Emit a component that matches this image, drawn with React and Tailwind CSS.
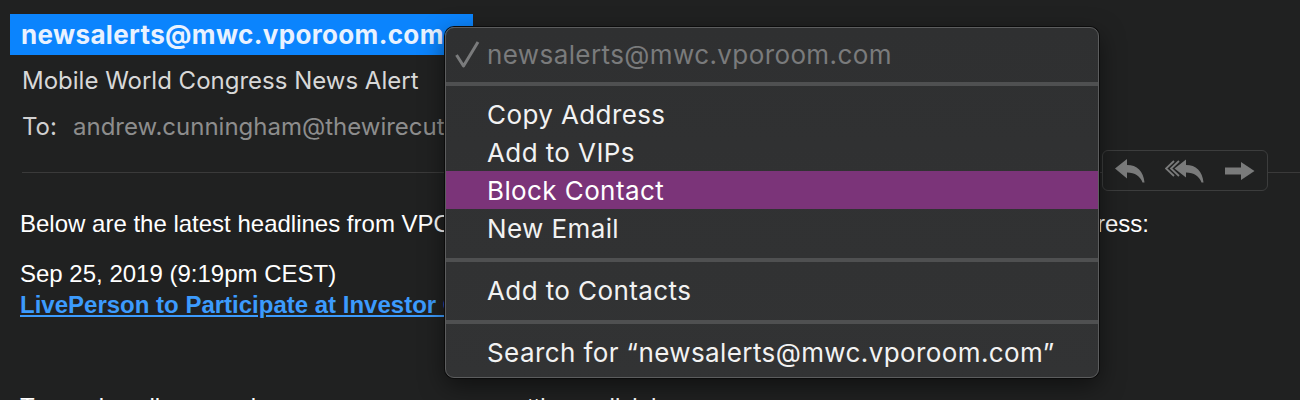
import React from 'react';

const ui = { fontFamily: 'Inter, "Noto Sans", sans-serif' };
const body = { fontFamily: '"Liberation Sans", Arial, sans-serif' };

function ReplyIcon() {
  return (
    <svg width="30" height="24" viewBox="0 0 30 24" fill="#7a7b7b">
      <path d="M0 9.5 L12 0 L12 6 C22 6 28.5 12 29.5 23.5 L27.5 23.5 C25.5 17.5 20 13.5 12 13.5 L12 19.5 Z" />
    </svg>
  );
}

function ReplyAllIcon() {
  return (
    <svg width="40" height="24" viewBox="0 0 40 24" fill="#7a7b7b">
      <path d="M9 2 L1 9.5 L9 17" fill="none" stroke="#7a7b7b" strokeWidth="1.8" />
      <path d="M14 2 L6 9.5 L14 17" fill="none" stroke="#7a7b7b" strokeWidth="1.8" />
      <path d="M9.5 9.5 L21 0.5 L21 6 C31 6 37.5 12 38.5 23.5 L36.5 23.5 C34.5 17.5 29 13.5 21 13.5 L21 18.5 Z" />
    </svg>
  );
}

function ForwardIcon() {
  return (
    <svg width="30" height="18" viewBox="0 0 30 18" fill="#7a7b7b">
      <path d="M0 5.5 H16 V0 L29.5 9 L16 18 V12.5 H0 Z" />
    </svg>
  );
}

function Separator({ className = '' }) {
  return <div className={`h-[4px] bg-[#4f5051] ${className}`} />;
}

function MenuItem({ children, active }) {
  return (
    <div
      className={`h-[38px] flex items-center pl-[41px] text-[26px] tracking-[0.4px] ${
        active ? 'bg-[#7b3479] text-white' : 'text-[#f2f2f2]'
      }`}
    >
      {children}
    </div>
  );
}

export default function App() {
  return (
    <div className="relative w-[1300px] h-[400px] overflow-hidden bg-[#202121]">
      {/* message header */}
      <div style={ui} className="pt-[14px] pl-[10px]">
        <div className="w-[463px] h-[41px] bg-[#0b84fd] pl-[11px] flex items-center text-[26px] font-bold text-[#e9f2ff] tracking-[0.35px]">
          newsalerts@mwc.vporoom.com
        </div>
        <div className="pl-[12px] h-[52px] flex items-center text-[24px] text-[#d8d8d8]">
          Mobile World Congress News Alert
        </div>
        <div className="pl-[12px] h-[40px] flex items-center text-[24px]">
          <span className="text-[#d0d0d0] w-[51px]">To:</span>
          <span className="text-[#8d8d8d]">andrew.cunningham@thewirecutter.com</span>
        </div>
      </div>

      {/* divider + actions */}
      <div className="flex items-center pl-[22px] mt-[3px]">
        <div className="flex-1 h-px bg-[#3a3a3a] mt-[4px]" />
        <div className="w-[166px] h-[41px] border border-[#3c3d3d] rounded-[6px] flex items-center justify-between pl-[12px] pr-[12px]">
          <ReplyIcon />
          <ReplyAllIcon />
          <ForwardIcon />
        </div>
        <div className="w-[32px] h-px bg-[#3a3a3a] mt-[4px]" />
      </div>

      {/* message body */}
      <div style={body} className="pl-[20px] text-[24px] text-white">
        <div className="h-[28px] mt-[19px] leading-[28px] whitespace-nowrap">
          Below are the latest headlines from VPO
          <span className="tracking-[0.4px]">room's newsroom for companies at the Mobile World Cong</span>
          ress:
        </div>
        <div className="mt-[22px] leading-[28px]">Sep 25, 2019 (9:19pm CEST)</div>
        <div className="leading-[28px] mt-[3px]">
          <a className="font-bold text-[#3c9bfd] underline underline-offset-2">
            LivePerson to Participate at Investor Conferences
          </a>
        </div>
        <div className="mt-[74px] leading-[28px] whitespace-nowrap">
          To receive all news releases or manage your settings, click here
        </div>
      </div>

      {/* contextual menu */}
      <div
        style={ui}
        className="absolute left-[445px] top-[27px] w-[654px] h-[351px] rounded-[9px] bg-gradient-to-b from-[#2f3031] to-[#323334] border border-[#5c5d5e] shadow-[0_0_0_1px_#0c0c0c,0_8px_24px_rgba(0,0,0,0.5)] pt-[7px] overflow-hidden"
      >
        <div className="h-[38px] flex items-center pl-[9px] text-[26px] tracking-[0.4px] text-[#7a7b7c]">
          <svg width="32" height="28" viewBox="0 0 32 28" className="shrink-0">
            <path d="M1.5 15 L8.5 26 L23 2" fill="none" stroke="#7a7b7c" strokeWidth="3" strokeLinejoin="round" />
          </svg>
          <span>newsalerts@mwc.vporoom.com</span>
        </div>
        <Separator className="mt-[9px] mb-[9px]" />
        <MenuItem>Copy Address</MenuItem>
        <MenuItem>Add to VIPs</MenuItem>
        <MenuItem active>Block Contact</MenuItem>
        <MenuItem>New Email</MenuItem>
        <Separator className="mt-[11px] mb-[9px]" />
        <MenuItem>Add to Contacts</MenuItem>
        <Separator className="mt-[11px] mb-[9px]" />
        <MenuItem>Search for “newsalerts@mwc.vporoom.com”</MenuItem>
      </div>
    </div>
  );
}
